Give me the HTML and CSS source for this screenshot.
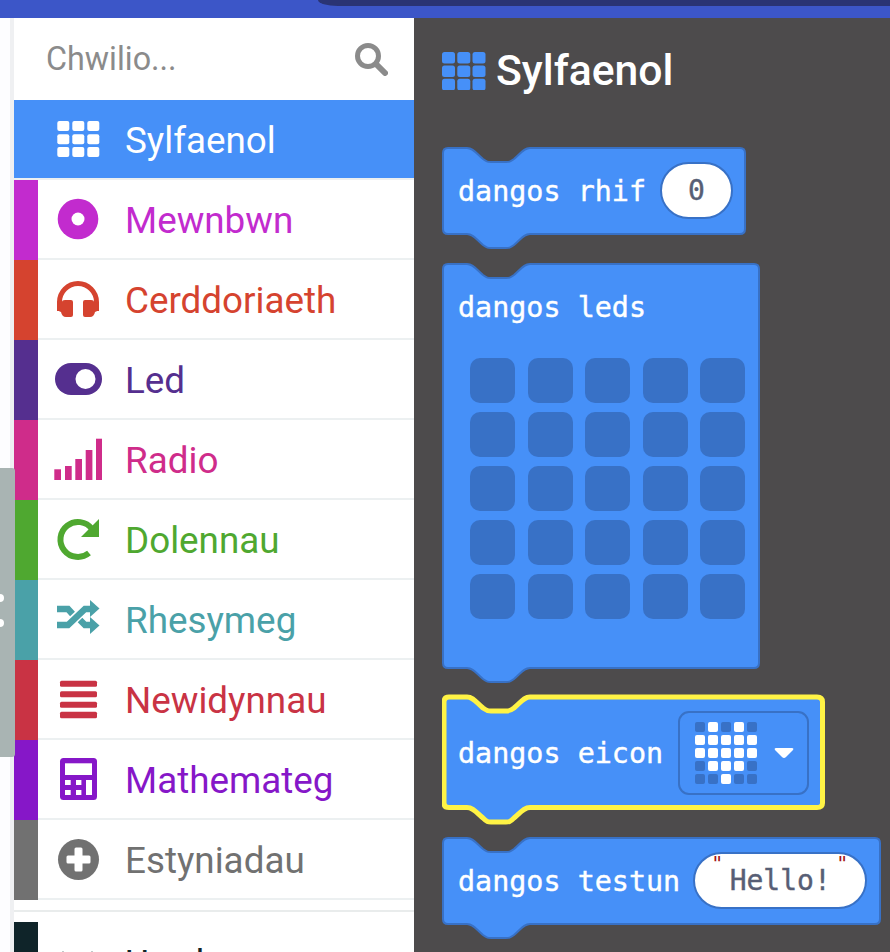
FILE: index.html
```html
<!DOCTYPE html>
<html lang="en">
<head>
  <meta charset="UTF-8" />
  <meta name="viewport" content="width=device-width, initial-scale=1.0"/>
  <title>Blociau</title>
  <link rel="stylesheet" href="styles.css">
</head>
<body>
  <div class="topbar"><div class="topbar-tab"></div></div>

  <div class="main">
    <div class="gutter"></div>
    <div class="handle"><i></i><i></i></div>

    <nav class="sidebar">
      <div class="search">
        <span class="search-text">Chwilio...</span>
        <svg class="search-icon" width="34" height="34" viewBox="0 0 34 34">
          <circle cx="14" cy="14" r="10.5" fill="none" stroke="currentColor" stroke-width="5"/>
          <path d="M22 22 L31 31" stroke="currentColor" stroke-width="6" stroke-linecap="round"/>
        </svg>
      </div>

      <div class="item active">
        <div class="strip"></div>
        <div class="item-body">
          <svg class="icon" viewBox="0 0 48 48" fill="currentColor">
            <rect x="3.3" y="6" width="12" height="10" rx="2"/><rect x="18.3" y="6" width="12" height="10" rx="2"/><rect x="33.3" y="6" width="12" height="10" rx="2"/>
            <rect x="3.3" y="19.3" width="12" height="10" rx="2"/><rect x="18.3" y="19.3" width="12" height="10" rx="2"/><rect x="33.3" y="19.3" width="12" height="10" rx="2"/>
            <rect x="3.3" y="32" width="12" height="10" rx="2"/><rect x="18.3" y="32" width="12" height="10" rx="2"/><rect x="33.3" y="32" width="12" height="10" rx="2"/>
          </svg>
          <span class="label">Sylfaenol</span>
        </div>
      </div>

      <div class="item input">
        <div class="strip"></div>
        <div class="item-body">
          <svg class="icon" viewBox="0 0 48 48">
            <circle cx="24" cy="24" r="20.3" fill="currentColor"/>
            <circle cx="24" cy="24" r="6.5" fill="#fff"/>
          </svg>
          <span class="label">Mewnbwn</span>
        </div>
      </div>

      <div class="item music">
        <div class="strip"></div>
        <div class="item-body">
          <svg class="icon" viewBox="0 0 48 48" fill="currentColor">
            <path d="M5.5 36 V27 A18.5 18.5 0 0 1 42.5 27 V36" fill="none" stroke="currentColor" stroke-width="5"/>
            <path d="M8 27 Q8 25 11 25 H17 Q19 25 19 27 V40 Q19 42 17 42 H12 Q8 42 7 37 Q3 36 3 32 Q3 28 8 27 Z"/>
            <path d="M40 27 Q40 25 37 25 H31 Q29 25 29 27 V40 Q29 42 31 42 H36 Q40 42 41 37 Q45 36 45 32 Q45 28 40 27 Z"/>
          </svg>
          <span class="label">Cerddoriaeth</span>
        </div>
      </div>

      <div class="item led">
        <div class="strip"></div>
        <div class="item-body">
          <svg class="icon" viewBox="0 0 48 48">
            <rect x="1" y="8" width="47" height="32" rx="16" fill="currentColor"/>
            <circle cx="31.5" cy="24" r="10" fill="#fff"/>
          </svg>
          <span class="label">Led</span>
        </div>
      </div>

      <div class="item radio">
        <div class="strip"></div>
        <div class="item-body">
          <svg class="icon" viewBox="0 0 48 48" fill="currentColor">
            <rect x="0.3" y="34.3" width="6.7" height="10.7"/>
            <rect x="11" y="31" width="6.7" height="14"/>
            <rect x="21.3" y="24" width="6.7" height="21"/>
            <rect x="31.7" y="15" width="6.7" height="30"/>
            <rect x="42" y="3.7" width="6.7" height="41.3"/>
          </svg>
          <span class="label">Radio</span>
        </div>
      </div>

      <div class="item loops">
        <div class="strip"></div>
        <div class="item-body">
          <svg class="icon" viewBox="0 0 48 48">
            <path d="M35 38 A17.5 17.5 0 1 1 38 14" fill="none" stroke="currentColor" stroke-width="6"/>
            <path d="M45 4 V22 H27 Z" fill="currentColor"/>
          </svg>
          <span class="label">Dolennau</span>
        </div>
      </div>

      <div class="item logic">
        <div class="strip"></div>
        <div class="item-body">
          <svg class="icon" viewBox="0 0 48 48" fill="currentColor">
            <path d="M3 14 H14 L18.5 19 M26 25 L31 30 H40 M3 30 H14 L31 14 H40" fill="none" stroke="currentColor" stroke-width="6.5"/>
            <path d="M36 5 L45.5 13.5 L36 22 Z"/>
            <path d="M36 22 L45.5 30.5 L36 39 Z"/>
          </svg>
          <span class="label">Rhesymeg</span>
        </div>
      </div>

      <div class="item variables">
        <div class="strip"></div>
        <div class="item-body">
          <svg class="icon" viewBox="0 0 48 48" fill="currentColor">
            <rect x="6" y="5.7" width="37" height="6" rx="1.5"/>
            <rect x="6" y="16.3" width="37" height="6" rx="1.5"/>
            <rect x="6" y="26.7" width="37" height="6" rx="1.5"/>
            <rect x="6" y="36.7" width="37" height="6.5" rx="1.5"/>
          </svg>
          <span class="label">Newidynnau</span>
        </div>
      </div>

      <div class="item math">
        <div class="strip"></div>
        <div class="item-body">
          <svg class="icon" viewBox="0 0 48 48">
            <rect x="6" y="3" width="37" height="42" rx="3.5" fill="currentColor"/>
            <g fill="#fff">
              <rect x="11" y="8.3" width="27" height="11.7"/>
              <rect x="11" y="25" width="5.7" height="5"/>
              <rect x="22" y="25" width="5.4" height="5"/>
              <rect x="32" y="25" width="6" height="15"/>
              <rect x="11" y="35" width="5.7" height="5"/>
              <rect x="22" y="35" width="5.4" height="5"/>
            </g>
          </svg>
          <span class="label">Mathemateg</span>
        </div>
      </div>

      <div class="item extensions">
        <div class="strip"></div>
        <div class="item-body">
          <svg class="icon" viewBox="0 0 48 48">
            <circle cx="24.5" cy="24.5" r="20.5" fill="currentColor"/>
            <rect x="12.5" y="20.5" width="24" height="8" rx="1.5" fill="#fff"/>
            <rect x="20.5" y="12.5" width="8" height="24" rx="1.5" fill="#fff"/>
          </svg>
          <span class="label">Estyniadau</span>
        </div>
      </div>

      <div class="divider"></div>

      <div class="item advanced">
        <div class="strip"></div>
        <div class="item-body">
          <svg class="icon" viewBox="0 0 48 48" fill="currentColor">
            <path d="M3 25 L9 13 L15 25 Z"/>
            <path d="M32 25 L38 13 L44 25 Z"/>
          </svg>
          <span class="label">Uwch</span>
        </div>
      </div>
    </nav>

    <section class="flyout">
      <div class="flyout-title">
        <svg width="44" height="40" viewBox="0 -2 44 40" fill="#4690f8">
          <rect x="0" y="0" width="13" height="11.6" rx="2.5"/><rect x="15.3" y="0" width="13" height="11.6" rx="2.5"/><rect x="30.5" y="0" width="13" height="11.6" rx="2.5"/>
          <rect x="0" y="13.4" width="13" height="11.6" rx="2.5"/><rect x="15.3" y="13.4" width="13" height="11.6" rx="2.5"/><rect x="30.5" y="13.4" width="13" height="11.6" rx="2.5"/>
          <rect x="0" y="26.8" width="13" height="11.6" rx="2.5"/><rect x="15.3" y="26.8" width="13" height="11.6" rx="2.5"/><rect x="30.5" y="26.8" width="13" height="11.6" rx="2.5"/>
        </svg>
        <span>Sylfaenol</span>
      </div>

      <!-- dangos rhif -->
      <div class="block block-number">
        <svg class="block-shape" width="305" height="102">
          <path d="M6 1 H25 C31 1 34 6 41 12 C45 15 46 15 49 15 H64 C67 15 68 15 72 12 C79 6 82 1 88 1 H298 Q303 1 303 6 V82 Q303 87 298 87 H88 C82 87 79 92 72 98 C68 101 67 101 64 101 H49 C46 101 45 101 41 98 C34 92 31 87 25 87 H6 Q1 87 1 82 V6 Q1 1 6 1 Z"/>
        </svg>
        <div class="block-row">
          <span class="block-label">dangos rhif</span>
          <span class="pill pill-number">0</span>
        </div>
      </div>

      <!-- dangos leds -->
      <div class="block block-leds">
        <svg class="block-shape" width="319" height="420">
          <path d="M6 1 H25 C31 1 34 6 41 12 C45 15 46 15 49 15 H64 C67 15 68 15 72 12 C79 6 82 1 88 1 H312 Q317 1 317 6 V400 Q317 405 312 405 H88 C82 405 79 410 72 416 C68 419 67 419 64 419 H49 C46 419 45 419 41 416 C34 410 31 405 25 405 H6 Q1 405 1 400 V6 Q1 1 6 1 Z"/>
        </svg>
        <div class="block-row">
          <span class="block-label">dangos leds</span>
        </div>
        <div class="led-grid">
          <i></i><i></i><i></i><i></i><i></i>
          <i></i><i></i><i></i><i></i><i></i>
          <i></i><i></i><i></i><i></i><i></i>
          <i></i><i></i><i></i><i></i><i></i>
          <i></i><i></i><i></i><i></i><i></i>
        </div>
      </div>

      <!-- dangos eicon, selected -->
      <div class="block block-icon">
        <svg class="block-shape selected" width="385" height="131">
          <path d="M7 3 H25 C31 3 34 8 41 14 C45 17 46 17 49 17 H64 C67 17 68 17 72 14 C79 8 82 3 88 3 H375 Q380.5 3 380.5 8 V109 Q380.5 113.5 375 113.5 H88 C82 113.5 79 118 72 124 C68 128 67 128 64 128 H49 C46 128 45 128 41 124 C34 118 31 113.5 25 113.5 H7 Q2 113.5 2 109 V8 Q2 3 7 3 Z"/>
        </svg>
        <div class="block-row">
          <span class="block-label">dangos eicon</span>
          <div class="icon-field">
            <div class="mini-grid">
              <i></i><b></b><i></i><b></b><i></i>
              <b></b><b></b><b></b><b></b><b></b>
              <b></b><b></b><b></b><b></b><b></b>
              <i></i><b></b><b></b><b></b><i></i>
              <i></i><i></i><b></b><i></i><i></i>
            </div>
            <svg class="caret" width="20" height="12" viewBox="0 0 20 12">
              <path d="M2 1 H18 Q20 1 19 3 L12 10 Q10 12 8 10 L1 3 Q0 1 2 1 Z" fill="#fff"/>
            </svg>
          </div>
        </div>
      </div>

      <!-- dangos testun -->
      <div class="block block-text">
        <svg class="block-shape" width="440" height="102">
          <path d="M6 1 H25 C31 1 34 6 41 12 C45 15 46 15 49 15 H64 C67 15 68 15 72 12 C79 6 82 1 88 1 H433 Q438 1 438 6 V82 Q438 87 433 87 H88 C82 87 79 92 72 98 C68 101 67 101 64 101 H49 C46 101 45 101 41 98 C34 92 31 87 25 87 H6 Q1 87 1 82 V6 Q1 1 6 1 Z"/>
        </svg>
        <div class="block-row">
          <span class="block-label">dangos testun</span>
          <span class="pill pill-text">
            <span class="quote quote-left">"</span>Hello!<span class="quote quote-right">"</span>
          </span>
        </div>
      </div>
    </section>
  </div>
</body>
</html>
```

FILE: styles.css
```css
* {
  box-sizing: border-box;
}
html, body {
  margin: 0;
  height: 952px;
  overflow: hidden;
}
body {
  background-color: #fff;
  font-family: Roboto, sans-serif;
}

.topbar {
  height: 18px;
  background-color: #3c56c8;
  display: flex;
  justify-content: flex-end;
}
.topbar-tab {
  width: 572px;
  height: 6px;
  background-color: #2a3474;
  border-bottom-left-radius: 20px 6px;
}

.main {
  position: relative;
  display: flex;
  height: 934px;
}
.gutter {
  width: 14px;
  background-color: #fdfdff;
  border-right: 4px solid #eff0f2;
}
.handle {
  position: absolute;
  left: 0;
  top: 450px;
  width: 15px;
  height: 289px;
  background-color: #a9b4b3;
  border-top-right-radius: 3px;
  border-bottom-right-radius: 3px;
  z-index: 2;
  overflow: hidden;
}
.handle i {
  position: absolute;
  left: -4px;
  width: 8px;
  height: 8px;
  border-radius: 50%;
  background-color: #fff;
}
.handle i:first-child {
  top: 126px;
}
.handle i:last-child {
  top: 151px;
}

/* category list */
.sidebar {
  width: 400px;
  overflow: hidden;
  background-color: #fff;
}
.search {
  height: 82px;
  display: flex;
  align-items: center;
  justify-content: space-between;
  padding: 0 26px 0 32px;
  color: #8b8b8b;
}
.search-text {
  font-size: 32.3px;
}
.search-icon {
  display: block;
}
.item {
  display: flex;
  height: 80px;
}
.strip {
  width: 24px;
  background-color: currentColor;
}
.item-body {
  flex: 1;
  display: flex;
  align-items: center;
  padding-left: 16px;
  border-bottom: 2px solid #ecf0f1;
}
.icon {
  width: 48px;
  height: 48px;
  flex: none;
  display: block;
}
.label {
  font-size: 36.8px;
  margin-left: 23px;
  padding-top: 2px;
}
.item.active {
  background-color: #4690f8;
  color: #fff;
  border-bottom: 2px solid #ecf0f1;
}
.item.active .strip {
  background-color: transparent;
}
.item.active .item-body {
  border-bottom: 0;
}
.input { color: #c22bce; }
.music { color: #d5432f; }
.led { color: #552f8f; }
.radio { color: #cf2c8a; }
.loops { color: #4fa830; }
.logic { color: #4aa1a8; }
.variables { color: #c93344; }
.math { color: #8617c8; }
.extensions { color: #717171; }
.advanced { color: #0f2429; }
.divider {
  height: 2px;
  margin-top: 10px;
  margin-bottom: 10px;
  background-color: #e9ecec;
}
.advanced .item-body {
  border-bottom: 0;
}

/* blocks */
.flyout {
  flex: 1;
  background-color: #4d4b4c;
  padding: 30px 0 0 28px;
}
.flyout-title {
  display: flex;
  align-items: center;
  gap: 10px;
  height: 44px;
  margin-bottom: 55px;
  color: #fff;
  font-size: 42.7px;
  font-weight: 500;
}
.block {
  position: relative;
  color: #fff;
  font-family: "DejaVu Sans Mono", monospace;
  font-size: 28px;
}
.block-shape {
  position: absolute;
  left: 0;
  top: 0;
  display: block;
}
.block-shape path {
  fill: #4690f8;
  stroke: #3871c6;
  stroke-width: 2;
}
.block-shape.selected path {
  stroke: #fff345;
  stroke-width: 5;
}
.block-row {
  position: relative;
  display: flex;
  align-items: center;
  gap: 14px;
  height: 87px;
  padding-left: 16px;
}
.block-label {
  font-size: 28.4px;
  padding-top: 2px;
  -webkit-text-stroke: 0.4px #fff;
}
.block-number {
  height: 102px;
  margin-bottom: 14px;
}
.block-leds {
  height: 420px;
  margin-bottom: 11px;
}
.block-icon {
  height: 131px;
  margin-bottom: 12px;
}
.block-icon .block-row {
  height: 117px;
  gap: 15px;
}
.block-text {
  height: 102px;
}
.block-text .block-row {
  gap: 13px;
}
.pill {
  position: relative;
  display: flex;
  align-items: center;
  justify-content: center;
  height: 57px;
  background-color: #fff;
  border: 2px solid #3871c6;
  border-radius: 29px;
  color: #575e75;
  -webkit-text-stroke: 0.4px #575e75;
}
.pill-number {
  width: 73px;
}
.pill-text {
  width: 174px;
}
.quote {
  position: absolute;
  top: -3px;
  color: #a31515;
  font-size: 20px;
  -webkit-text-stroke: 0;
}
.quote-left {
  left: 16px;
}
.quote-right {
  right: 17px;
}
.led-grid {
  position: relative;
  display: grid;
  grid-template-columns: repeat(5, 45px);
  grid-auto-rows: 45px;
  gap: 9px 12.5px;
  padding: 8px 0 0 28px;
}
.led-grid i {
  background-color: #3871c6;
  border-radius: 10px;
}
.icon-field {
  display: flex;
  align-items: center;
  width: 131px;
  height: 84px;
  padding-left: 15px;
  border: 2px solid #3871c6;
  border-radius: 11px;
}
.mini-grid {
  display: grid;
  grid-template-columns: repeat(5, 10px);
  grid-auto-rows: 10px;
  gap: 3px;
}
.mini-grid i, .mini-grid b {
  border-radius: 2px;
}
.mini-grid i {
  background-color: #3871c6;
}
.mini-grid b {
  background-color: #fff;
}
.caret {
  display: block;
  margin-left: 17px;
}
```
